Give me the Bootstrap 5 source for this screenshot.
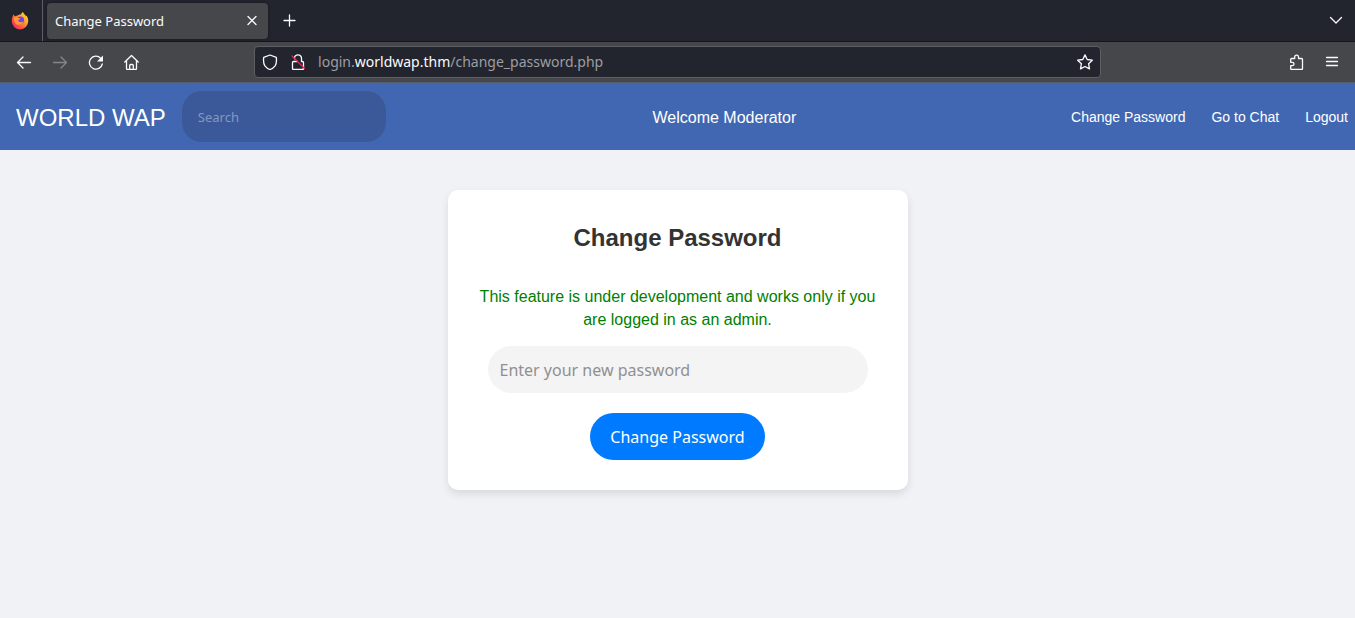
<!DOCTYPE html>
<html lang="en">
<head>
<meta charset="utf-8">
<meta name="viewport" content="width=device-width, initial-scale=1">
<title>Change Password</title>
<link href="https://cdn.jsdelivr.net/npm/bootstrap@5.3.0/dist/css/bootstrap.min.css" rel="stylesheet">
<style>
body { background: #f0f2f6; font-family: "Liberation Sans", Arial, sans-serif; }
.chrome { font-family: "Noto Sans", sans-serif; }
.chrome svg { display: block; fill: none; stroke: #fbfbfe; stroke-width: 1.3; stroke-linecap: round; stroke-linejoin: round; }
.chrome button { background: none; border: 0; padding: 0; }
.tab-strip { height: 42px; background: #23252e; border-bottom: 1px solid #15161c; }
.pinned { width: 43px; padding-left: 11px; border-right: 1px solid #5d5e66; }
.browser-tab { width: 221px; height: 36px; margin: 0 14px 0 4px; padding: 0 8px; background: #46474b; border-radius: 4px; color: #fbfbfe; font-size: 13px; box-shadow: 0 0 3px #15161c; }
.browser-tab span { padding-top: 2px; }
.toolbar { height: 41px; background: #46474b; border-bottom: 1px solid #555c72; }
.side { width: 18.75%; }
.address { flex: 1 1 0; height: 32px; background: #23252e; border: 1px solid #5d5e66; border-radius: 4px; padding: 0 7px; }
.url { font-size: 14px; line-height: 20px; color: #9d9da3; }
.url b { font-weight: 400; color: #fbfbfe; }
.site-nav { height: 67px; background: #4267b2; padding: 0 7px 0 16px; }
.site-nav a, .site-nav span { padding-top: 2px; color: #fff; text-decoration: none; }
.site-nav .brand { font-size: 24px; }
.search { width: 204px; height: 51px; background: #3b5998; border: 0; border-radius: 20px; color: #fff; font: 13px "Noto Sans", sans-serif; padding: 0 16px; }
.search::placeholder { color: #8497c4; opacity: 1; }
.site-links { gap: 26px; font-size: 14px; }
.panel { width: 460px; max-width: 100%; margin: 40px auto; padding: 30px; background: #fff; border-radius: 10px; box-shadow: 0 4px 8px rgba(0,0,0,.1); }
.panel h1 { font-size: 24px; font-weight: 700; line-height: 36px; color: #333; margin: 0 0 29px; }
.notice { color: green; font-size: 16px; line-height: 23px; margin: 0 0 15px; }
.pass { height: 47px; margin: 0 10px 20px; padding: 0 12px; background: #f4f4f4; border: 0; border-radius: 25px; font: 16px "Noto Sans", sans-serif; }
.pass::placeholder { color: #909090; opacity: 1; }
.submit { height: 47px; padding: 0 20px; border: 0; border-radius: 25px; background: #007bff; color: #fff; font: 16px "Noto Sans", sans-serif; }
</style>
</head>
<body>
<div class="chrome">
  <div class="tab-strip d-flex align-items-center">
    <div class="pinned h-100 d-flex align-items-center">
      <svg width="18" height="18" viewBox="0 0 18 18" style="stroke:none">
        <defs>
          <linearGradient id="flame" x1="1" y1="0" x2="0" y2="1"><stop offset="0" stop-color="#fff04a"/><stop offset=".35" stop-color="#ffa52a"/><stop offset=".7" stop-color="#ff4a46"/><stop offset="1" stop-color="#e3207c"/></linearGradient>
        </defs>
        <path fill="url(#flame)" d="M2.800 2.200C3 3.400 3.500 4 4.200 4.300 5 3.700 6 3.500 6.900 3.500 8 2.400 9.500 2.500 10 2.700c.2-1.500 1-2.300 2-2.700.2 1.600 2.100 2.400 3 4.200l.2-.8c1.500 1.600 2.200 3.700 2 5.900A8.200 8.200 0 0 1 .8 9.300C.7 6.500 1.500 4 2.800 2.200z"/>
        <circle cx="9.500" cy="8" r="3.600" fill="#7542e5"/>
        <path fill="#ff9a32" d="M3 5.800C4.500 4.900 6.500 5.200 7.500 6.100l1.800.3c0 1-1.600 1.200-2.200 1.600.3 2.400 3 2.800 4.900 1.600-.6 3-4.300 4-6.700 2.600C3.800 11 2.700 8.300 3 5.800z"/>
      </svg>
    </div>
    <div class="browser-tab d-flex align-items-center justify-content-between">
      <span>Change Password</span>
      <button aria-label="Close tab"><svg width="16" height="16" viewBox="0 0 16 16"><path d="M4 3.500l8 8M12 3.500l-8 8"/></svg></button>
    </div>
    <button aria-label="New tab"><svg width="16" height="16" viewBox="0 0 16 16"><path d="M7.500 2v11M2 7.500h11"/></svg></button>
    <button class="ms-auto me-2 pe-1" aria-label="List all tabs"><svg width="14" height="16" viewBox="0 0 14 16"><path d="M1.500 4.500L7 10l5.500-5.500"/></svg></button>
  </div>
  <div class="toolbar d-flex align-items-center">
    <div class="side d-flex align-items-center ps-3 gap-3">
      <button aria-label="Back"><svg width="16" height="16" viewBox="0 0 16 16"><path d="M14.500 8.500h-13M7 3L1.500 8.500 7 14"/></svg></button>
      <button class="ms-1" aria-label="Forward"><svg width="16" height="16" viewBox="0 0 16 16" style="stroke:#85868b"><path d="M1.500 8.500h13M9 3l5.500 5.500L9 14"/></svg></button>
      <button class="ms-1" aria-label="Reload"><svg width="16" height="16" viewBox="0 0 16 16"><path d="M14.300 10A6.500 6.500 0 1 1 12.700 4.200"/><path fill="#fbfbfe" stroke="none" d="M15 1.500v6H9z"/></svg></button>
      <button class="ms-1" aria-label="Home"><svg width="16" height="16" viewBox="0 0 16 16"><path d="M.8 8L7.500 1.500 14.200 8M2.500 7v7.500q0 1 1 1h8q1 0 1-1V7M5.700 15.500v-4q0-1 1-1h1.600q1 0 1 1v4"/></svg></button>
    </div>
    <div class="address d-flex align-items-center">
      <svg width="16" height="16" viewBox="0 0 16 16"><path d="M8 1l6.300 2.300q.7 5.800-1.200 8.500Q11 14.500 8 15.500 5 14.500 2.900 11.800 1 9.100 1.700 3.300z"/></svg>
      <svg class="ms-2 me-1" width="24" height="16" viewBox="-1 0 24 16"><path d="M7.500 4.800V4.300a3.500 3.500 0 0 1 7 0V7.500h1q1 0 1 1v6q0 1-1 1h-9q-1 0-1-1v-6q0-1 1-1h4"/><path stroke="#e22850" d="M5 2l12.500 12.500"/></svg>
      <a href="#" class="url flex-grow-1 text-decoration-none ms-1">login.<b>worldwap.thm</b>/change_password.php</a>
      <button aria-label="Bookmark this page"><svg width="16" height="16" viewBox="0 0 16 16"><path d="M8 .9l2.200 4.600 5.100.7-3.700 3.500.9 5.200L8 12.500l-4.500 2.400.9-5.200L.7 6.200l5.100-.7z"/></svg></button>
    </div>
    <div class="side d-flex align-items-center justify-content-end pe-3 gap-3">
      <button class="me-1" aria-label="Extensions"><svg width="16" height="16" viewBox="0 0 16 16"><path d="M1.700 5.500q0-1 1-1h3V3a1.900 1.900 0 0 1 3.800 0v1.500h3q1 0 1 1v9q0 1-1 1H2.700q-1 0-1-1v-2.800h1.600a1.700 1.700 0 0 0 0-3.400H1.700z"/></svg></button>
      <button aria-label="Application menu"><svg width="14" height="16" viewBox="0 0 14 16"><path d="M1.500 3.500h11M1.500 7.500h11M1.500 11.500h11"/></svg></button>
    </div>
  </div>
</div>

<nav class="site-nav d-flex align-items-center justify-content-between">
  <div class="d-flex align-items-center gap-3">
    <a class="brand" href="#">WORLD WAP</a>
    <input class="search" type="search" placeholder="Search" aria-label="Search">
  </div>
  <span class="me-2">Welcome Moderator</span>
  <div class="site-links d-flex">
    <a href="#">Change Password</a>
    <a href="#">Go to Chat</a>
    <a href="#">Logout</a>
  </div>
</nav>

<main>
  <form class="panel d-flex flex-column text-center">
    <h1>Change Password</h1>
    <p class="notice">This feature is under development and works only if you are logged in as an admin.</p>
    <input class="pass" type="password" placeholder="Enter your new password" aria-label="New password">
    <button class="submit align-self-center" type="button">Change Password</button>
  </form>
</main>
<script src="https://cdn.jsdelivr.net/npm/bootstrap@5.3.0/dist/js/bootstrap.bundle.min.js"></script>
</body>
</html>
